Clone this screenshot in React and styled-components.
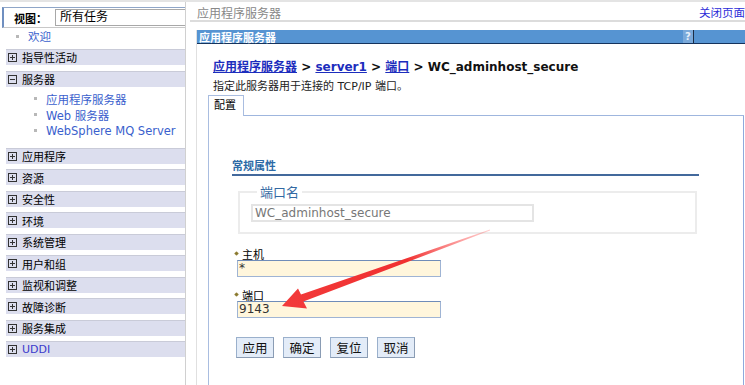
import React from 'react';
import styled, {createGlobalStyle} from 'styled-components';

const Global = createGlobalStyle`
    html, body {
        margin: 0;
        padding: 0;
        background: #fff;
        width: 745px;
        height: 385px;
        overflow: hidden;
    }
    body {
        font-family: "DejaVu Sans", "Noto Sans CJK SC", sans-serif;
        font-size: 11px;
        color: #000;
    }
`

const Page = styled.div`
    position: relative;
    display: flex;
    width: 745px;
    height: 385px;
    border-top: 2px solid #e4e4e4;
    box-sizing: border-box;
    overflow: hidden;
`

const Sidebar = styled.div`
    width: 186px;
    flex-shrink: 0;
    border-right: 1px solid #d0d0d0;
    padding-top: 5px;
    box-sizing: border-box;
`

const ViewRow = styled.div`
    display: flex;
    align-items: center;
    height: 19px;
    border-top: 1px solid #8fa6c8;
    border-left: 2px solid #6f8fc0;
    border-bottom: 1px solid #c8c8c8;
    margin-left: 2px;
    padding-left: 10px;
    label {
        font-weight: bold;
        width: 41px;
        font-size: 11px;
    }
`

const Select = styled.div`
    flex: 1;
    height: 15px;
    border: 1px solid #a8a8a8;
    border-right: none;
    font-size: 12px;
    line-height: 15px;
    padding-left: 4px;
`

const Item = styled.div`
    display: flex;
    align-items: center;
    height: 16px;
    padding-left: ${p => p.$indent}px;
    color: #3a5fcd;
    font-size: 11.5px;
    &::before {
        content: '';
        width: 3px;
        height: 3px;
        background: #b8b8b8;
        margin-right: 9px;
    }
`

const Category = styled.div`
    display: flex;
    align-items: center;
    height: 15px;
    margin: ${p => p.$gap}px 0 0 6px;
    border-top: 1px solid #c9cbd8;
    background: #dcdeee;
    font-size: 11px;
    color: ${p => p.$link ? '#3a3acc' : '#000'};
`

const Toggle = styled.span`
    width: 7px;
    height: 7px;
    border: 1px solid #333;
    margin: 0 5px 0 2px;
    position: relative;
    &::before {
        content: '';
        position: absolute;
        left: 1px;
        right: 1px;
        top: 3px;
        height: 1px;
        background: #333;
    }
    &::after {
        content: '';
        display: ${p => p.$open ? 'none' : 'block'};
        position: absolute;
        top: 1px;
        bottom: 1px;
        left: 3px;
        width: 1px;
        background: #333;
    }
`

const Children = styled.div`
    padding: 4px 0 3px;
`

const Main = styled.div`
    flex: 1;
    margin-left: 4px;
    display: flex;
    flex-direction: column;
    min-width: 0;
`

const TopBar = styled.div`
    display: flex;
    justify-content: space-between;
    align-items: center;
    height: 16px;
    padding: 2px 0 0 7px;
    border-bottom: 2px solid #dcdcdc;
    font-size: 12px;
    color: #888;
    a {
        color: #2b2bd8;
        text-decoration: none;
        white-space: nowrap;
        font-size: 11.5px;
    }
`

const Content = styled.div`
    flex: 1;
    margin: 8px 0 0 6px;
    border-left: 1px solid #e0e0e0;
    display: flex;
    flex-direction: column;
`

const TitleBar = styled.div`
    display: flex;
    align-items: center;
    height: 13px;
    background: #5694d2;
    border-bottom: 1px solid #15335c;
    color: #fff;
    font-weight: bold;
    font-size: 11px;
    padding-left: 2px;
    span { flex: 1; }
`

const Help = styled.div`
    width: 10px;
    height: 13px;
    background: #7aa9da;
    color: #e8f0fa;
    font-size: 10px;
    text-align: center;
    line-height: 13px;
    border-right: 1px solid #1c2c44;
    margin-right: 51px;
`

const Body = styled.div`
    padding: 13px 0 0 16px;
    flex: 1;
    display: flex;
    flex-direction: column;
`

const Crumbs = styled.div`
    font-size: 12px;
    font-weight: bold;
    color: #111;
    a {
        color: #1c2dbd;
        text-decoration: underline;
    }
`

const Desc = styled.div`
    margin-top: 3px;
    font-size: 11px;
    color: #222;
`

const Tabs = styled.div`
    margin: 2px 0 0 -5px;
    display: flex;
    align-items: flex-end;
`

const Tab = styled.div`
    width: 36px;
    height: 21px;
    border: 1px solid #a9bde0;
    border-bottom: none;
    font-size: 11px;
    line-height: 20px;
    padding-left: 5px;
    box-sizing: border-box;
`

const TabLine = styled.div`
    flex: 1;
    border-bottom: 1px solid #9fb6de;
    margin-right: 1px;
`

const Panel = styled.div`
    flex: 1;
    margin: 0 1px 0 -5px;
    border-left: 1px solid #a9bde0;
    border-right: 1px solid #8fa9dc;
    padding: 41px 0 0 23px;
`

const SectionTitle = styled.div`
    width: 467px;
    font-size: 11px;
    font-weight: bold;
    color: #2d6aa6;
    padding-bottom: 1px;
    border-bottom: 2px solid #43699c;
`

const Fieldset = styled.fieldset`
    margin: 6px 0 0 6px;
    width: 459px;
    box-sizing: border-box;
    border: 2px solid #ececec;
    padding: 3px 0 10px 11px;
    legend {
        color: #3369a3;
        font-size: 13px;
        padding: 0 3px;
        margin-left: 6px;
    }
`

const ReadOnly = styled.div`
    width: 283px;
    height: 18px;
    box-sizing: border-box;
    border: 2px solid #e4e4e4;
    font-size: 12px;
    line-height: 14px;
    padding-left: 2px;
    color: #777;
`

const Field = styled.div`
    margin: ${p => p.$top}px 0 0 5px;
`

const Label = styled.div`
    display: flex;
    align-items: center;
    font-size: 11px;
    height: 13px;
    &::before {
        content: '';
        width: 3px;
        height: 3px;
        background: #8a7a30;
        transform: rotate(45deg);
        margin: 0 4px 0 -2px;
        box-shadow: 0 0 1px #b0a060;
    }
`

const Input = styled.div`
    width: 204px;
    height: 17px;
    box-sizing: border-box;
    background: #fff6dc;
    border: 1px solid #9fb4d4;
    border-top-color: #6f8cb8;
    font-size: 12px;
    line-height: 15px;
    padding-left: 1px;
    color: #333;
`

const Buttons = styled.div`
    display: flex;
    gap: 9px;
    margin: 19px 0 0 4px;
`

const Button = styled.button`
    width: 38px;
    height: 21px;
    padding: 0;
    background: #e3ecf8;
    border: 1px solid #9ab0cc;
    border-right-color: #8a9cb4;
    border-bottom-color: #8a9cb4;
    font-family: "Noto Sans CJK SC", sans-serif;
    font-size: 12.5px;
    color: #111;
`

const ArrowLayer = styled.svg`
    position: absolute;
    left: 0;
    top: 0;
    pointer-events: none;
`

const groups = ['应用程序', '资源', '安全性', '环境', '系统管理', '用户和组', '监视和调整', '故障诊断', '服务集成']

export default function App() {
    return (
        <>
            <Global />
            <Page>
                <Sidebar>
                    <ViewRow>
                        <label>视图：</label>
                        <Select>所有任务</Select>
                    </ViewRow>
                    <Item $indent={16}>欢迎</Item>
                    <Category $gap={4.5}><Toggle />指导性活动</Category>
                    <Category $gap={6}><Toggle $open />服务器</Category>
                    <Children>
                        <Item $indent={34}>应用程序服务器</Item>
                        <Item $indent={34}>Web 服务器</Item>
                        <Item $indent={34}>WebSphere MQ Server</Item>
                    </Children>
                    {groups.map((g, i) => (
                        <Category key={g} $gap={i === 0 ? 6 : 5.5}><Toggle />{g}</Category>
                    ))}
                    <Category $gap={5.5} $link><Toggle />UDDI</Category>
                </Sidebar>
                <Main>
                    <TopBar>
                        <span>应用程序服务器</span>
                        <a href="#">关闭页面</a>
                    </TopBar>
                    <Content>
                        <TitleBar>
                            <span>应用程序服务器</span>
                            <Help>?</Help>
                        </TitleBar>
                        <Body>
                            <Crumbs>
                                <a href="#">应用程序服务器</a> &gt; <a href="#">server1</a> &gt; <a href="#">端口</a> &gt; WC_adminhost_secure
                            </Crumbs>
                            <Desc>指定此服务器用于连接的 TCP/IP 端口。</Desc>
                            <Tabs>
                                <Tab>配置</Tab>
                                <TabLine />
                            </Tabs>
                            <Panel>
                                <SectionTitle>常规属性</SectionTitle>
                                <Fieldset>
                                    <legend>端口名</legend>
                                    <ReadOnly>WC_adminhost_secure</ReadOnly>
                                </Fieldset>
                                <Field $top={13}>
                                    <Label>主机</Label>
                                    <Input>*</Input>
                                </Field>
                                <Field $top={11}>
                                    <Label>端口</Label>
                                    <Input>9143</Input>
                                </Field>
                                <Buttons>
                                    <Button>应用</Button>
                                    <Button>确定</Button>
                                    <Button>复位</Button>
                                    <Button>取消</Button>
                                </Buttons>
                            </Panel>
                        </Body>
                    </Content>
                </Main>
                <ArrowLayer width="745" height="385" viewBox="0 0 745 385">
                    <defs>
                        <linearGradient id="arrowFade" x1="282" y1="304" x2="490" y2="228" gradientUnits="userSpaceOnUse">
                            <stop offset="0" stopColor="#f23a3a" />
                            <stop offset="0.6" stopColor="#f03030" />
                            <stop offset="1" stopColor="#ff6060" stopOpacity="0.3" />
                        </linearGradient>
                    </defs>
                    <polygon
                        fill="url(#arrowFade)"
                        points="282,304 298,286.5 301,292.6 490,227.6 490,228.6 303.4,299.6 307,306.5"
                    />
                </ArrowLayer>
            </Page>
        </>
    )
}
